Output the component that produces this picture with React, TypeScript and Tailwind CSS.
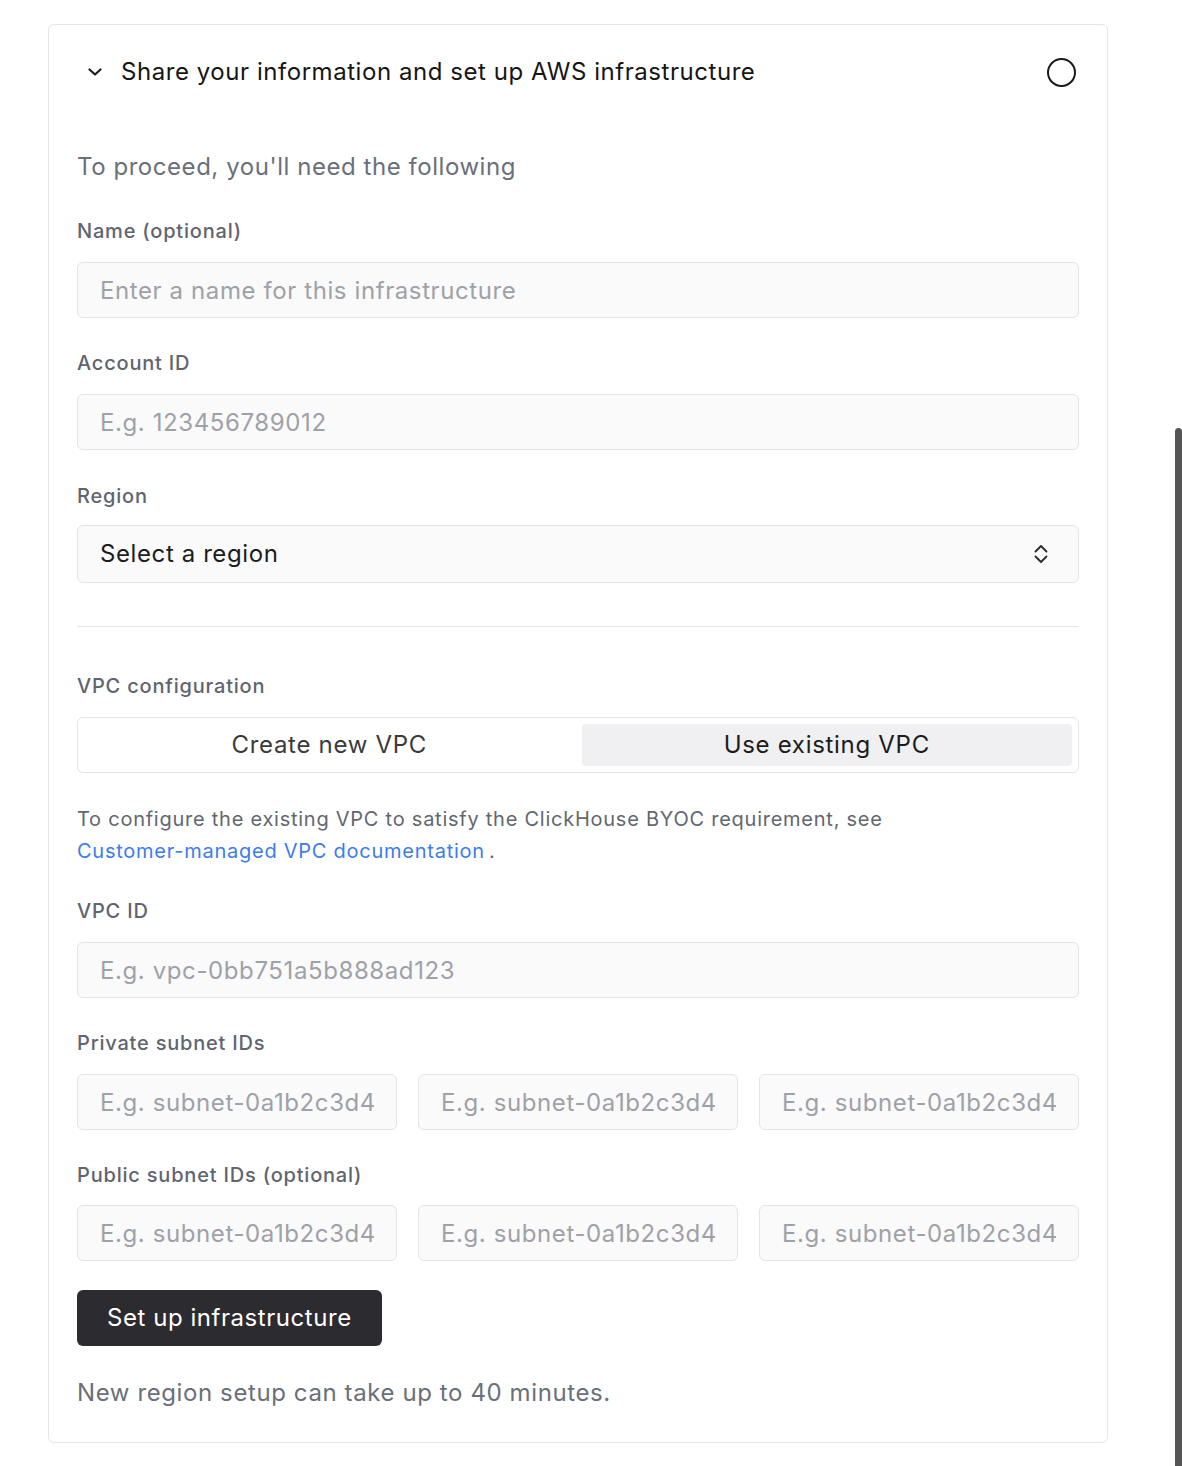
import React, { useState } from "react";

const font = { fontFamily: "Inter, 'Noto Sans', sans-serif" };

function FieldLabel({ children, className = "" }: { children: React.ReactNode; className?: string }) {
  return (
    <div className={`text-[20px] leading-[28px] font-medium tracking-[0.8px] text-[#5f6470] ${className}`}>
      {children}
    </div>
  );
}

function TextInput({ placeholder, className = "" }: { placeholder: string; className?: string }) {
  return (
    <input
      type="text"
      placeholder={placeholder}
      className={`h-[56px] w-full min-w-0 rounded-[6px] border border-[#e4e4e8] bg-[#fafafb] px-[22px] text-[24px] tracking-[0.6px] text-[#1c1c1c] placeholder:text-[#9fa1a8] outline-none ${className}`}
    />
  );
}

function ChevronDown() {
  return (
    <svg width="24" height="24" viewBox="0 0 24 24" fill="none" stroke="#1c1c1c" strokeWidth="2.2" strokeLinecap="round" strokeLinejoin="round">
      <path d="M6.5 9.5l5.5 5 5.5-5" />
    </svg>
  );
}

function UpDownIcon() {
  return (
    <svg width="20" height="24" viewBox="0 0 20 24" fill="none" stroke="#2a2a2a" strokeWidth="1.8" strokeLinecap="round" strokeLinejoin="round">
      <path d="M4.5 9.5l5.5-5.5 5.5 5.5" />
      <path d="M4.5 14.5l5.5 5.5 5.5-5.5" />
    </svg>
  );
}

function SubnetRow() {
  return (
    <div className="grid grid-cols-3 gap-[21px]">
      <TextInput placeholder="E.g. subnet-0a1b2c3d4" />
      <TextInput placeholder="E.g. subnet-0a1b2c3d4" />
      <TextInput placeholder="E.g. subnet-0a1b2c3d4" />
    </div>
  );
}

export default function App() {
  const [vpcMode, setVpcMode] = useState<"new" | "existing">("existing");

  return (
    <div className="relative min-h-[1466px] w-full bg-white pt-[24px]" style={font}>
      <section className="ml-[48px] w-[1060px] rounded-[6px] border border-[#e6e6e8] bg-white pb-[33px]">
        <header className="mt-[23px] flex h-[48px] items-center justify-between pl-[34px] pr-[31px]">
          <div className="flex items-center gap-[14px]">
            <ChevronDown />
            <h2 className="text-[24px] leading-[32px] tracking-[0.55px] text-[#161616]">
              Share your information and set up AWS infrastructure
            </h2>
          </div>
          <span className="block h-[29px] w-[29px] rounded-full border-[2px] border-[#1a1a1a]" />
        </header>

        <div className="px-[28px]">
          <p className="mt-[55px] text-[24px] leading-[32px] tracking-[0.55px] text-[#6a6f7a]">
            To proceed, you'll need the following
          </p>

          <FieldLabel className="mt-[34px] mb-[17px]">Name (optional)</FieldLabel>
          <TextInput placeholder="Enter a name for this infrastructure" />

          <FieldLabel className="mt-[31px] mb-[17px]">Account ID</FieldLabel>
          <TextInput placeholder="E.g. 123456789012" />

          <FieldLabel className="mt-[32px] mb-[15px]">Region</FieldLabel>
          <button
            type="button"
            className="flex h-[58px] w-full items-center justify-between rounded-[6px] border border-[#e4e4e8] bg-[#fafafb] pl-[22px] pr-[27px] text-[24px] tracking-[0.6px] text-[#1c1c1c]"
          >
            <span>Select a region</span>
            <UpDownIcon />
          </button>

          <div className="mt-[43px] h-px w-full bg-[#e6e6e8]" />

          <FieldLabel className="mt-[45px] mb-[17px]">VPC configuration</FieldLabel>
          <div className="grid h-[56px] grid-cols-2 gap-[7px] rounded-[6px] border border-[#e4e4e8] bg-white p-[6px]">
            <button
              type="button"
              onClick={() => setVpcMode("new")}
              className={`rounded-[4px] text-[24px] tracking-[0.7px] ${vpcMode === "new" ? "bg-[#f0f0f2] text-[#1c1c1c]" : "text-[#3a3a3a]"}`}
            >
              Create new VPC
            </button>
            <button
              type="button"
              onClick={() => setVpcMode("existing")}
              className={`rounded-[4px] text-[24px] tracking-[0.7px] ${vpcMode === "existing" ? "bg-[#f0f0f2] text-[#1c1c1c]" : "text-[#3a3a3a]"}`}
            >
              Use existing VPC
            </button>
          </div>

          <p className="mt-[30px] text-[20px] leading-[32px] tracking-[0.75px] text-[#62676f]">
            To configure the existing VPC to satisfy the ClickHouse BYOC requirement, see
            <br />
            <a href="#" className="mr-[4px] text-[#3b7cf0]">
              Customer-managed VPC documentation
            </a>
            .
          </p>

          <FieldLabel className="mt-[30px] mb-[17px]">VPC ID</FieldLabel>
          <TextInput placeholder="E.g. vpc-0bb751a5b888ad123" />

          <FieldLabel className="mt-[31px] mb-[17px]">Private subnet IDs</FieldLabel>
          <SubnetRow />

          <FieldLabel className="mt-[31px] mb-[16px]">Public subnet IDs (optional)</FieldLabel>
          <SubnetRow />

          <button
            type="button"
            className="mt-[29px] h-[56px] rounded-[6px] bg-[#2c2b30] px-[30px] text-[24px] tracking-[0.55px] text-white"
          >
            Set up infrastructure
          </button>

          <p className="mt-[31px] text-[24px] leading-[32px] tracking-[0.6px] text-[#6a6f7a]">
            New region setup can take up to 40 minutes.
          </p>
        </div>
      </section>

      {/* overlay scrollbar thumb */}
      <div className="absolute right-0 top-[428px] bottom-0 w-[7px] rounded-t-[4px] bg-[#555555]" />
    </div>
  );
}
